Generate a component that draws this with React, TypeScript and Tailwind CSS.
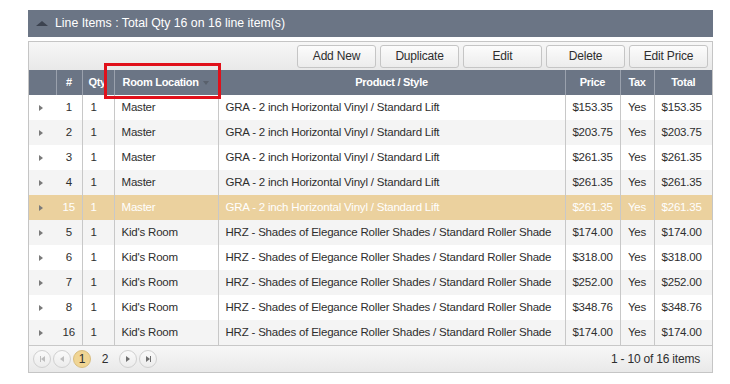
import React from 'react';

interface LineItem {
  id: string;
  qty: number;
  room: string;
  product: string;
  price: string;
  tax: string;
  total: string;
  selected?: boolean;
}

const GRA = 'GRA - 2 inch Horizontal Vinyl / Standard Lift';
const HRZ = 'HRZ - Shades of Elegance Roller Shades / Standard Roller Shade';

const items: LineItem[] = [
  { id: '1', qty: 1, room: 'Master', product: GRA, price: '$153.35', tax: 'Yes', total: '$153.35' },
  { id: '2', qty: 1, room: 'Master', product: GRA, price: '$203.75', tax: 'Yes', total: '$203.75' },
  { id: '3', qty: 1, room: 'Master', product: GRA, price: '$261.35', tax: 'Yes', total: '$261.35' },
  { id: '4', qty: 1, room: 'Master', product: GRA, price: '$261.35', tax: 'Yes', total: '$261.35' },
  { id: '15', qty: 1, room: 'Master', product: GRA, price: '$261.35', tax: 'Yes', total: '$261.35', selected: true },
  { id: '5', qty: 1, room: "Kid's Room", product: HRZ, price: '$174.00', tax: 'Yes', total: '$174.00' },
  { id: '6', qty: 1, room: "Kid's Room", product: HRZ, price: '$318.00', tax: 'Yes', total: '$318.00' },
  { id: '7', qty: 1, room: "Kid's Room", product: HRZ, price: '$252.00', tax: 'Yes', total: '$252.00' },
  { id: '8', qty: 1, room: "Kid's Room", product: HRZ, price: '$348.76', tax: 'Yes', total: '$348.76' },
  { id: '16', qty: 1, room: "Kid's Room", product: HRZ, price: '$174.00', tax: 'Yes', total: '$174.00' },
];

const toolbarButtons = ['Add New', 'Duplicate', 'Edit', 'Delete', 'Edit Price'];

function PagerButton({ children }: { children: React.ReactNode }) {
  return (
    <span className="flex h-[18px] w-[18px] items-center justify-center rounded-full border border-[#d0d0d0] bg-gradient-to-b from-[#fafafa] to-[#ececec]">
      {children}
    </span>
  );
}

export default function App() {
  return (
    <main
      className="h-[384px] w-[730px] bg-white pt-[10px] pl-[28px] text-[12px] text-[#2e2e2e]"
      style={{ fontFamily: '"Liberation Sans", Arial, sans-serif' }}
    >
      <div className="w-[685px]">
        {/* panel title */}
        <div className="flex h-[27px] items-center gap-[7px] bg-[#6b7585] pl-[8px] text-white">
          <span className="h-0 w-0 border-x-[6px] border-b-[5px] border-x-transparent border-b-[#3c4350]" />
          <span className="text-[12.3px]">Line Items : Total Qty 16 on 16 line item(s)</span>
        </div>

        {/* grid */}
        <div className="relative mt-[4px] border border-[#c5c5c5]">
          <div className="flex h-[28px] items-center justify-end gap-[4px] bg-gradient-to-b from-[#f7f7f7] to-[#e9e9e9] pr-[4px]">
            {toolbarButtons.map((label) => (
              <button
                key={label}
                className="h-[23px] w-[79px] rounded-[3px] border border-[#c5c5c5] bg-gradient-to-b from-[#fcfcfc] to-[#ececec] text-[12px] tracking-[-0.2px] text-[#2e2e2e]"
              >
                {label}
              </button>
            ))}
          </div>

          <table className="w-full table-fixed border-collapse text-[11.5px] tracking-[-0.2px] whitespace-nowrap">
            <colgroup>
              <col className="w-[27px]" />
              <col className="w-[26px]" />
              <col className="w-[32px]" />
              <col className="w-[104px]" />
              <col className="w-[347px]" />
              <col className="w-[55px]" />
              <col className="w-[34px]" />
              <col />
            </colgroup>
            <thead>
              <tr className="h-[25px] bg-[#6b7585] text-[11px] font-bold tracking-[-0.3px] text-white">
                <th className="border-r border-[#9aa1ad]" />
                <th className="border-r border-[#9aa1ad] text-center font-bold">#</th>
                <th className="overflow-hidden border-r border-[#9aa1ad] pl-[6px] text-left font-bold">Qty</th>
                <th className="border-r border-[#9aa1ad] pl-[8px] text-left font-bold">
                  <span className="inline-flex items-center gap-[4px]">
                    Room Location
                    <span className="h-0 w-0 border-x-[3px] border-t-[4px] border-x-transparent border-t-[#59606c]" />
                  </span>
                </th>
                <th className="border-r border-[#9aa1ad] text-center font-bold">Product / Style</th>
                <th className="border-r border-[#9aa1ad] text-center font-bold">Price</th>
                <th className="border-r border-[#9aa1ad] text-center font-bold">Tax</th>
                <th className="text-center font-bold">Total</th>
              </tr>
            </thead>
            <tbody>
              {items.map((item, i) => (
                <tr
                  key={item.id}
                  className={
                    item.selected
                      ? 'h-[25px] bg-[#ebd19e] text-white'
                      : i % 2 === 1
                        ? 'h-[25px] bg-[#f4f4f4]'
                        : 'h-[25px] bg-white'
                  }
                >
                  <td className="pl-[10px]">
                    <span className="block h-0 w-0 border-y-[3px] border-l-[4px] border-y-transparent border-l-[#7a7a7a]" />
                  </td>
                  <td className="border-r border-[#c8c8c8] text-center">{item.id}</td>
                  <td className="border-r border-[#c8c8c8] pl-[8px]">{item.qty}</td>
                  <td className="border-r border-[#c8c8c8] pl-[7px]">{item.room}</td>
                  <td className="overflow-hidden border-r border-[#c8c8c8] pl-[7px]">{item.product}</td>
                  <td className="border-r border-[#c8c8c8] text-center">{item.price}</td>
                  <td className="border-r border-[#c8c8c8] text-center">{item.tax}</td>
                  <td className="pl-[7px]">{item.total}</td>
                </tr>
              ))}
            </tbody>
          </table>

          {/* pager */}
          <div className="flex h-[27px] items-center justify-between border-t border-[#c8c8c8] bg-gradient-to-b from-[#f7f7f7] to-[#e9e9e9] pl-[4px] pr-[12px] tracking-[-0.2px]">
            <div className="flex items-center gap-[2px]">
              <PagerButton>
                <span className="flex items-center">
                  <span className="h-[6px] w-[1px] bg-[#bdbdbd]" />
                  <span className="h-0 w-0 border-y-[3px] border-r-[4px] border-y-transparent border-r-[#bdbdbd]" />
                </span>
              </PagerButton>
              <PagerButton>
                <span className="h-0 w-0 border-y-[3px] border-r-[4px] border-y-transparent border-r-[#bdbdbd]" />
              </PagerButton>
              <span className="flex h-[18px] w-[18px] items-center justify-center rounded-full border border-[#d9bd7e] bg-[#f0d594] text-[#2e2e2e]">
                1
              </span>
              <span className="w-[24px] text-center">2</span>
              <PagerButton>
                <span className="h-0 w-0 border-y-[3px] border-l-[4px] border-y-transparent border-l-[#6f6f6f]" />
              </PagerButton>
              <PagerButton>
                <span className="flex items-center">
                  <span className="h-0 w-0 border-y-[3px] border-l-[4px] border-y-transparent border-l-[#6f6f6f]" />
                  <span className="h-[6px] w-[1px] bg-[#6f6f6f]" />
                </span>
              </PagerButton>
            </div>
            <span>1 - 10 of 16 items</span>
          </div>

          {/* highlight box */}
          <div className="pointer-events-none absolute top-[21px] left-[75px] h-[36px] w-[117px] border-[3px] border-[#e0101a]" />
        </div>
      </div>
    </main>
  );
}
